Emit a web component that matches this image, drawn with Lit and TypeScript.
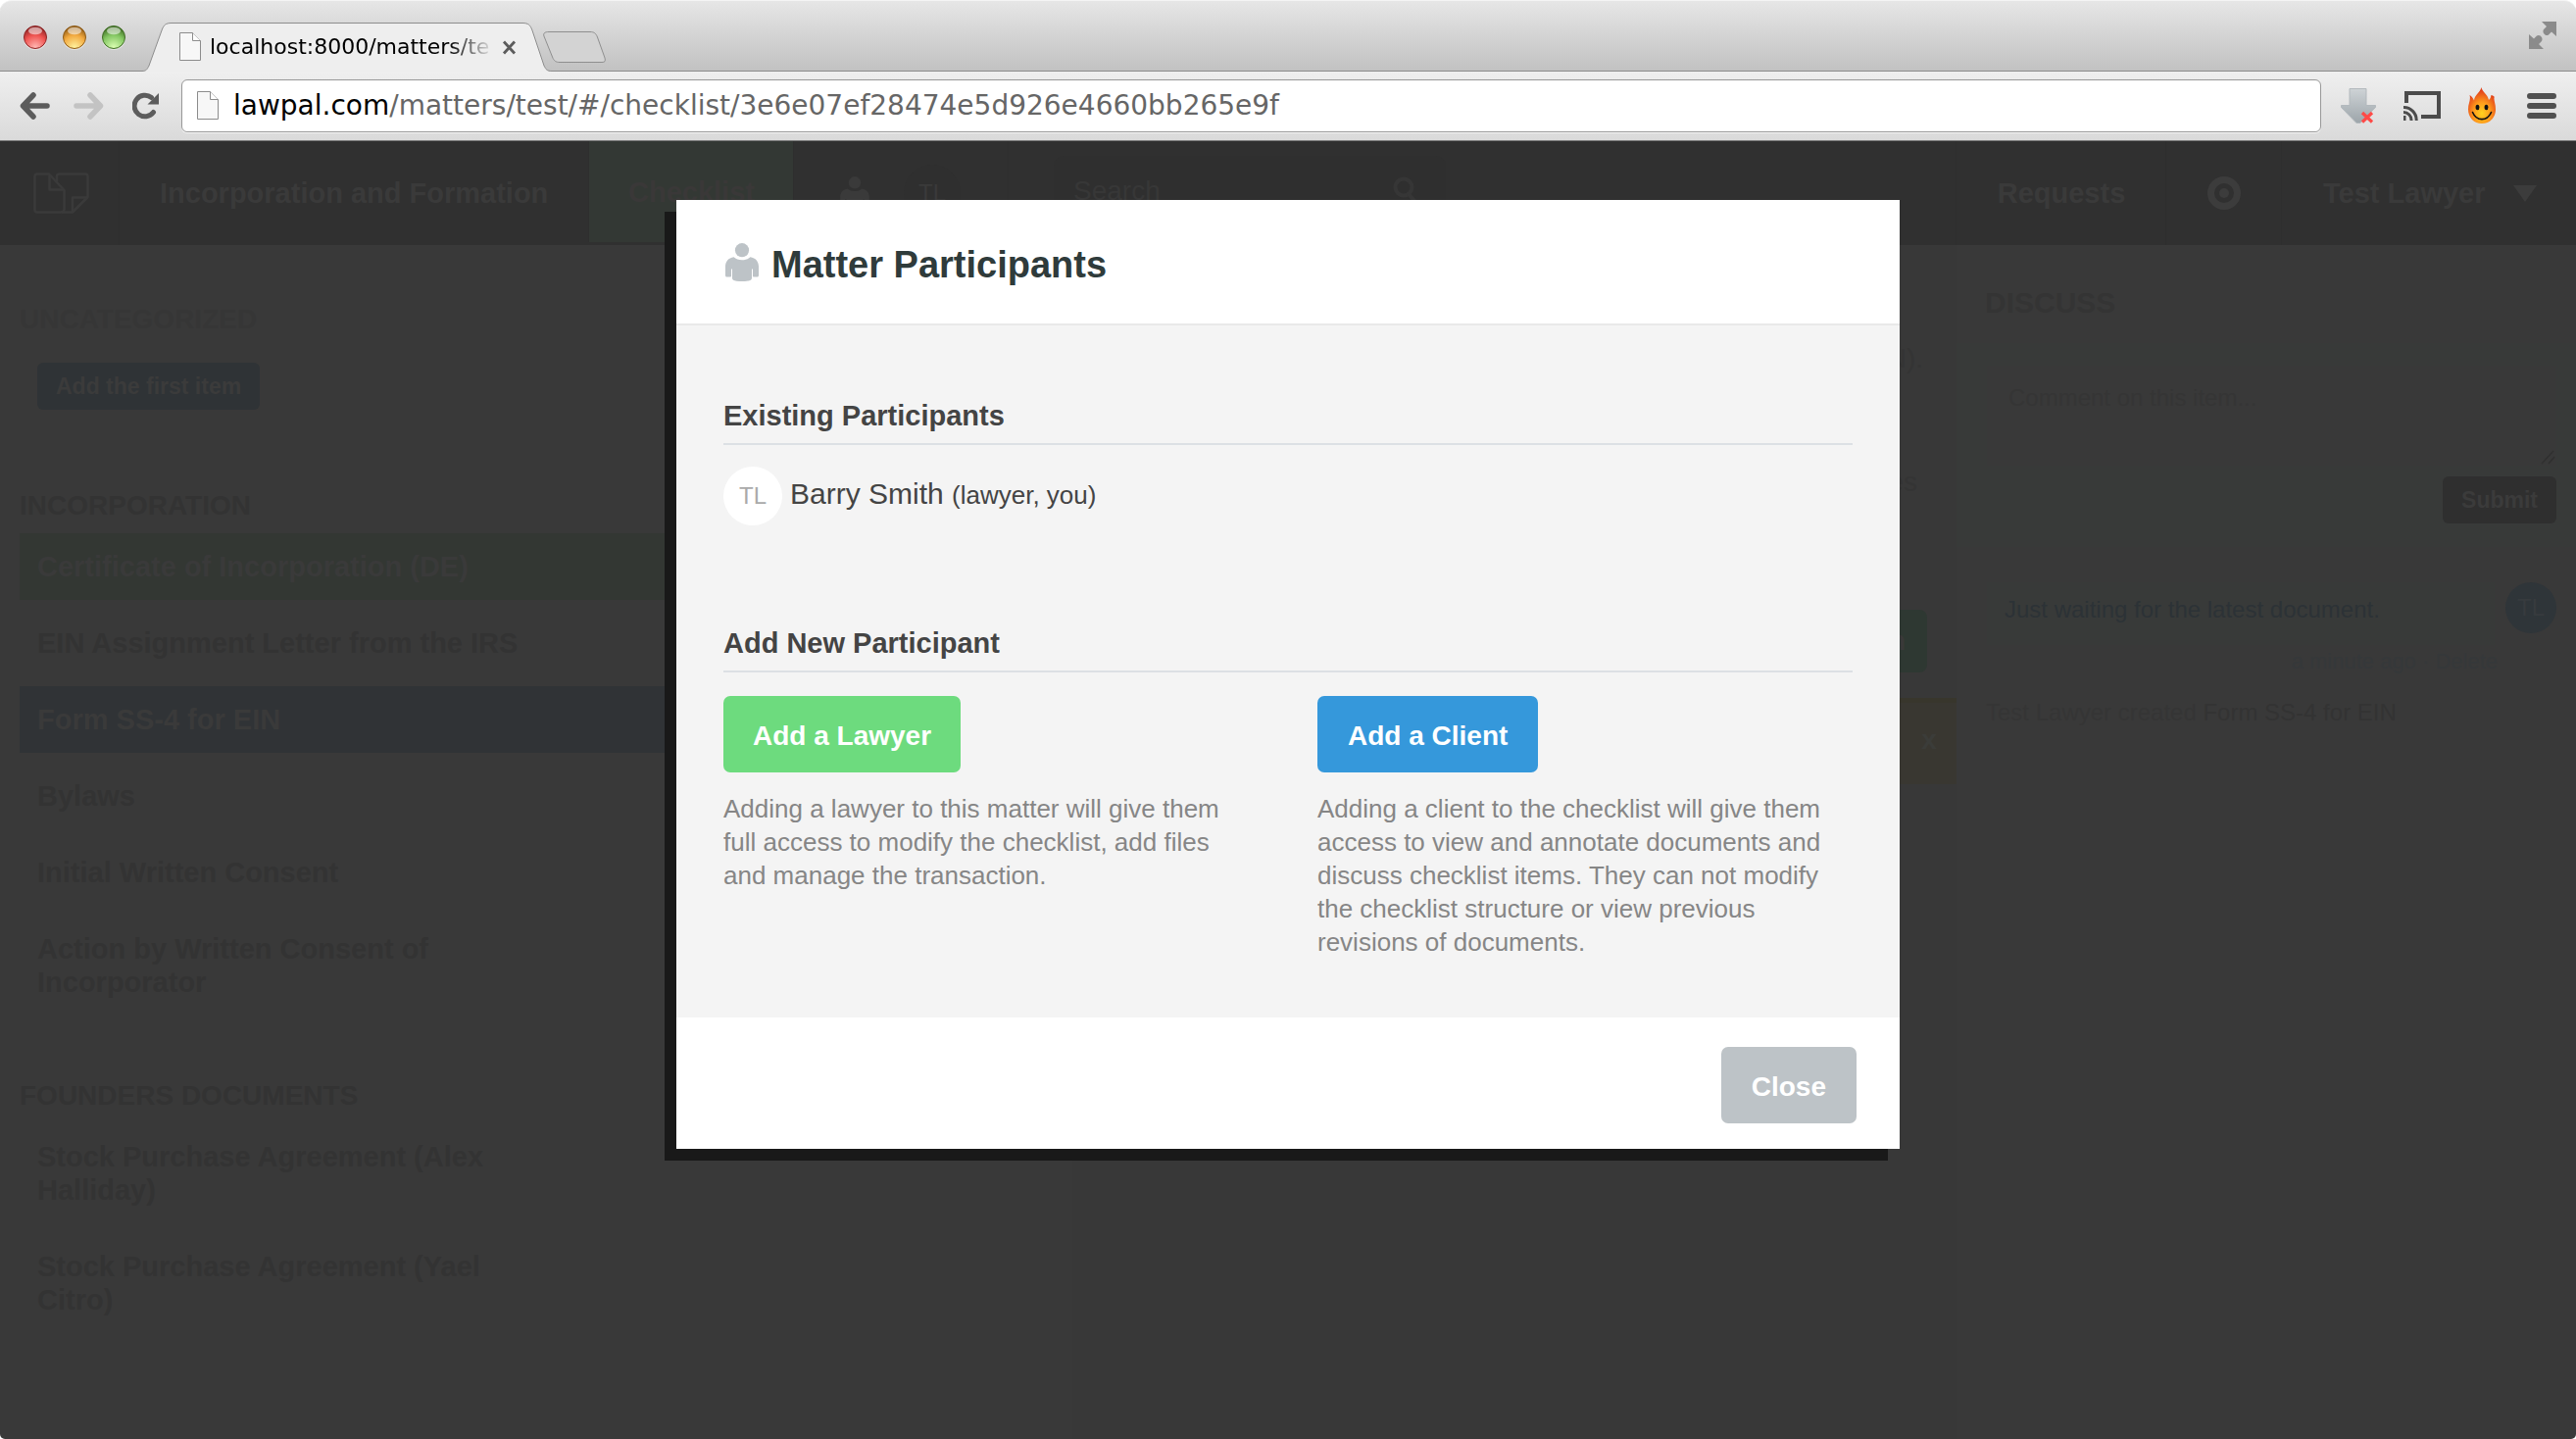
import { LitElement, html, css, svg } from "lit";
import { customElement } from "lit/decorators.js";
import { classMap } from "lit/directives/class-map.js";

interface Item {
  text: string;
  tone?: "done" | "current";
}
interface Group {
  title: string;
  items: Item[];
}

const GROUPS: Group[] = [
  {
    title: "INCORPORATION",
    items: [
      { text: "Certificate of Incorporation (DE)", tone: "done" },
      { text: "EIN Assignment Letter from the IRS" },
      { text: "Form SS-4 for EIN", tone: "current" },
      { text: "Bylaws" },
      { text: "Initial Written Consent" },
      { text: "Action by Written Consent of Incorporator" },
    ],
  },
  {
    title: "FOUNDERS DOCUMENTS",
    items: [
      { text: "Stock Purchase Agreement (Alex Halliday)" },
      { text: "Stock Purchase Agreement (Yael Citro)" },
    ],
  },
];

const personShape = svg`
  <circle cx="17" cy="7.2" r="7.1"/>
  <path d="M8.600 14.300C10.600 16.200 13.600 17.200 17 17.200s6.400-1 8.400-2.900c5.600.8 8.600 4.700 8.600 9.700v8.400c0 1.600-.6 2.200-2 2.200h-3.200c-.5 0-.8-.3-.8-.8V26.500h-1V35.600c0 1.300-.5 1.900-1.600 2.300-2.400.8-5.200 1.200-8.400 1.200s-6-.4-8.400-1.200C7.500 37.500 7 36.900 7 35.600V26.500H6v7.300c0 .5-.3.800-.8.800H2c-1.400 0-2-.6-2-2.200V24c0-5 3-8.900 8.600-9.700z"/>`;

const pageIcon = html`
  <svg width="22" height="30" viewBox="0 0 22 30" aria-hidden="true">
    <path d="M.5.500h13l8 8v20h-21z" fill="#f7f7f7" stroke="#8c8c8c"/>
    <path d="M13.500.500v8h8" fill="#fff" stroke="#8c8c8c"/>
  </svg>`;

const light = (id: string, rim: string, mid: string, low: string) => html`
  <svg width="26" height="28" viewBox="0 0 26 28" aria-hidden="true">
    <defs>
      <radialGradient id=${id} cx=".5" cy=".95" r=".9">
        <stop offset="0" stop-color=${low}/>
        <stop offset=".6" stop-color=${mid}/>
        <stop offset="1" stop-color=${rim}/>
      </radialGradient>
    </defs>
    <circle cx="13" cy="15" r="12" fill="#fff" opacity=".45"/>
    <circle cx="13" cy="14" r="11.500" fill="url(#${id})" stroke=${rim}/>
    <ellipse cx="13" cy="7.500" rx="7" ry="3.800" fill="#fff" opacity=".55"/>
  </svg>`;

@customElement("browser-chrome")
class BrowserChrome extends LitElement {
  static styles = css`
    :host { display: block; font-family: "DejaVu Sans", "Noto Sans", sans-serif; background: #fff; }
    svg { display: block; flex: none; }
    button { border: 0; padding: 0; margin: 0; background: none; font: inherit; display: block; }
    .strip {
      display: flex; align-items: flex-end; height: 73px; box-sizing: border-box;
      border-top: 1px solid #f4f4f4; border-radius: 12px 12px 0 0;
      background: linear-gradient(#e6e6e6, #c1c1c1);
      box-shadow: inset 0 -1px #8d8d8d;
    }
    .lights { display: flex; gap: 14px; padding: 0 16px 21px 23px; }
    .tab { position: relative; width: 418px; height: 50px; }
    .shape { position: absolute; inset: 0; }
    .inner {
      position: relative; display: flex; align-items: center; height: 50px;
      box-sizing: border-box; padding: 0 36px 0 38px;
    }
    .label {
      flex: 1; margin: 0 8px 0 9px; font-size: 22px; line-height: 30px; color: #000;
      white-space: nowrap;
      -webkit-mask-image: linear-gradient(90deg, #000 84%, transparent);
      mask-image: linear-gradient(90deg, #000 84%, transparent);
    }
    .new { margin: 0 0 8px -9px; position: relative; }
    .full { margin: 0 20px 23px auto; }
    .bar {
      display: flex; align-items: center; height: 71px; box-sizing: border-box;
      padding: 0 20px 1px 20px; background: linear-gradient(#efefef, #dadada);
      border-bottom: 1px solid #7a7a7a;
    }
    .nav { display: flex; gap: 24px; margin-right: 22px; }
    .nav button:last-child { margin-left: 5px; }
    .omni {
      flex: 1; display: flex; align-items: center; gap: 15px; height: 54px;
      box-sizing: border-box; padding: 0 15px; background: #fff;
      border: 1px solid #989898; border-radius: 6px; box-shadow: 0 1px #f6f6f6;
    }
    .url { font-size: 28px; line-height: 40px; color: #666; white-space: nowrap; }
    .host { color: #000; }
    .ext { display: flex; align-items: center; margin-left: 20px; gap: 28px; }
  `;

  render() {
    return html`
      <div class="strip">
        <div class="lights">
          ${light("red", "#8e2424", "#ef5350", "#ffb9b5")}
          ${light("amber", "#8f5a14", "#f2a93f", "#fff3a0")}
          ${light("green", "#3f6d24", "#84c763", "#dcffb4")}
        </div>
        <div class="tab">
          <svg class="shape" width="418" height="50" viewBox="0 0 418 50" aria-hidden="true">
            <path d="M0 49.500C4 49.500 5 48 7 44L20 8C22 2.500 24 .5 30 .5H388C394 .5 396 2.500 398 8L410 44C412 48 413 49.500 418 49.500V50H0z" fill="#eee"/>
            <path d="M0 49.500C4 49.500 5 48 7 44L20 8C22 2.500 24 .5 30 .5H388C394 .5 396 2.500 398 8L410 44C412 48 413 49.500 418 49.500" fill="none" stroke="#8d8d8d"/>
          </svg>
          <div class="inner">
            ${pageIcon}
            <span class="label">localhost:8000/matters/te</span>
            <button aria-label="Close tab">
              <svg width="15" height="15" viewBox="0 0 15 15" aria-hidden="true">
                <path d="M2 1.500l11 12M13 1.500L2 13.500" stroke="#5c5c5c" stroke-width="2.800"/>
              </svg>
            </button>
          </div>
        </div>
        <button class="new" aria-label="New tab">
          <svg width="64" height="33" viewBox="0 0 64 33" aria-hidden="true">
            <path d="M6 .5H48C52 .5 54 2 55.500 6L63 27C64 30.500 63 31.500 60 31.500H17C13 31.500 11 30 9.500 26L1 5C0 2 1.500 .5 6 .5z" fill="#d3d3d3" stroke="#8f8f8f"/>
          </svg>
        </button>
        <button class="full" aria-label="Enter full screen">
          <svg width="28" height="28" viewBox="0 0 28 28" fill="#8b8b8b" aria-hidden="true">
            <path d="M13 0h15v15l-5-4.500-3 3c-3 2-7-2-5-5.500l3-3z"/>
            <path d="M0 13l5 4.500 3-3c3-2 7 2 5 5.500l-3 3 5 5H0z"/>
          </svg>
        </button>
      </div>
      <div class="bar">
        <div class="nav">
          <button aria-label="Back">
            <svg width="31" height="28" viewBox="0 0 31 28" fill="none" stroke="#5c5c5c" stroke-width="5.500" stroke-linecap="round" stroke-linejoin="round" aria-hidden="true">
              <path d="M28 14H4M14 3L3.500 14 14 25"/>
            </svg>
          </button>
          <button aria-label="Forward">
            <svg width="31" height="28" viewBox="0 0 31 28" fill="none" stroke="#c3c3c3" stroke-width="5.500" stroke-linecap="round" stroke-linejoin="round" aria-hidden="true">
              <path d="M3 14h24M17 3l10.500 11L17 25"/>
            </svg>
          </button>
          <button aria-label="Reload">
            <svg width="28" height="28" viewBox="0 0 28 28" aria-hidden="true">
              <path d="M21.500 20.500A10.800 10.800 0 1 1 19.500 5.500" fill="none" stroke="#5c5c5c" stroke-width="5" stroke-linecap="round"/>
              <path d="M27 1v11.500H15.500z" fill="#5c5c5c"/>
            </svg>
          </button>
        </div>
        <div class="omni">
          ${pageIcon}
          <span class="url"><span class="host">lawpal.com</span>/matters/test/#/checklist/3e6e07ef28474e5d926e4660bb265e9f</span>
        </div>
        <div class="ext">
          <svg width="36" height="36" viewBox="0 0 36 36" aria-hidden="true">
            <defs>
              <linearGradient id="dl" x2="0" y2="1"><stop offset="0" stop-color="#ced3d6"/><stop offset="1" stop-color="#9da5aa"/></linearGradient>
            </defs>
            <path d="M9 .5h17v17h9.500v2L20 35.500h-4L.5 19.500v-2H9z" fill="url(#dl)" stroke="#b3b9bd"/>
            <path d="M22 25l10 9.500M32 25l-10 9.500" stroke="#ff4a47" stroke-width="3.200"/>
          </svg>
          <svg width="38" height="30" viewBox="0 0 38 30" fill="none" stroke="#4c4c4c" aria-hidden="true">
            <path d="M3 12V2h33v24H18" stroke-width="4"/>
            <path d="M0 27.500h2.500" stroke-width="5"/>
            <path d="M0 21.500A8 8 0 0 1 8 30M0 16.500A13 13 0 0 1 13.200 30" stroke-width="3"/>
          </svg>
          <svg width="28" height="38" viewBox="0 0 28 38" aria-hidden="true">
            <defs>
              <radialGradient id="fl" cx=".5" cy=".72" r=".62"><stop offset="0" stop-color="#ffd21f"/><stop offset=".5" stop-color="#ff9a1c"/><stop offset="1" stop-color="#e2431b"/></radialGradient>
            </defs>
            <path d="M13.500 0c.3 4.500 6.500 7 7.500 13 1.500-1 2-3 2.500-5 1.200 0 3 1 3.200 2-1 3 1.300 6 1.300 12.500 0 8.500-6 14.500-14 14.500S0 31 0 22.500C0 16.500 3 13 1.500 8c2 1 3.500 3 4.500 5.500C6.500 8 12 5.500 13.500 0z" fill="url(#fl)"/>
            <ellipse cx="9.500" cy="20.500" rx="1.900" ry="2.800" fill="#111"/>
            <ellipse cx="18.500" cy="20.500" rx="1.900" ry="2.800" fill="#111"/>
            <path d="M4.500 25.500c4 9.500 15 9.500 19 0" fill="none" stroke="#111" stroke-width="1.600" stroke-linecap="round"/>
          </svg>
          <button aria-label="Menu">
            <svg width="34" height="28" viewBox="0 0 34 28" stroke="#505050" stroke-width="6" stroke-linecap="round" aria-hidden="true">
              <path d="M7 4h24M7 14h24M7 24h24"/>
            </svg>
          </button>
        </div>
      </div>`;
  }
}

@customElement("matter-page")
class MatterPage extends LitElement {
  static styles = css`
    :host { display: flex; flex-direction: column; font-size: 28px; line-height: 34px; color: #333; }
    * { box-sizing: border-box; }
    h2, p, ul, ol { margin: 0; padding: 0; list-style: none; }
    a { color: inherit; text-decoration: none; }
    button, input, textarea { font: inherit; border: 0; margin: 0; }
    svg { display: block; flex: none; }
    .top {
      display: flex; height: 106px; background: #303030; color: #3a3a3a;
      font-size: 29px; font-weight: bold; white-space: nowrap;
    }
    .cell { display: flex; align-items: center; box-shadow: -1px 0 #2e2e2e; }
    .logo { width: 122px; padding-left: 34px; }
    .matter { width: 479px; padding-left: 41px; }
    .tab { width: 209px; justify-content: center; background: #333834; color: #3a3838; margin-bottom: 3px; }
    .people { width: 219px; padding-left: 47px; gap: 35px; }
    .badge {
      display: grid; place-items: center; width: 58px; height: 58px; border-radius: 50%;
      background: #2f2f2f; font-size: 24px; font-weight: normal;
    }
    .search { flex: 1; padding-left: 46px; }
    .box { display: flex; align-items: center; width: 400px; height: 76px; padding: 0 28px 4px 20px; border-radius: 10px; background: #2f2f2f; }
    .box input { flex: 1; min-width: 0; font-size: 28px; font-weight: normal; background: none; color: #373737; padding: 0; }
    .box input::placeholder { color: #373737; opacity: 1; }
    .requests { width: 214px; justify-content: center; }
    .record { width: 118px; justify-content: center; }
    .user { width: 300px; padding: 0 40px 0 42px; justify-content: space-between; }
    .cols { flex: 1; display: grid; grid-template-columns: minmax(0, 1094fr) minmax(0, 902fr) minmax(0, 632fr); }
    .list { padding: 59px 0 0 20px; }
    .head { font-size: 28px; line-height: 34px; font-weight: bold; }
    .faint { color: #363636; }
    .small {
      display: block; height: 48px; border-radius: 6px; padding: 0 19px;
      font-size: 23px; line-height: 48px; font-weight: bold; color: #3b3b3b;
    }
    .first { margin: 27px 0 81px 18px; background: #2f3336; }
    .items { display: grid; gap: 10px; margin: 11px 0 65px; }
    .item { display: block; padding: 17px 18px; font-size: 29px; font-weight: bold; }
    .words { display: block; max-width: 510px; }
    .done { background: #333733; color: #3a3a3a; }
    .current { background: #303336; color: #3a3a3a; }
    .detail { display: flex; flex-direction: column; align-items: flex-end; padding-top: 99px; background: #383838; }
    .note { margin-right: 34px; padding-bottom: 92px; color: #343434; }
    .note + .note { padding: 0 6px 113px 0; }
    .open { height: 64px; padding: 0 22px; border-radius: 8px; background: #2e3832; color: #393939; font-size: 28px; font-weight: bold; margin-right: 30px; }
    .alert {
      align-self: stretch; display: flex; justify-content: flex-end; align-items: center;
      height: 88px; margin-top: 26px; padding: 0 18px 8px; background: #393731; border-top: 5px solid #38362c;
    }
    .alert button { background: none; color: #3b3c39; font-weight: bold; padding: 0; width: 20px; }
    .title { font-size: 30px; font-weight: bold; padding: 42px 29px 0; line-height: 34px; color: #343434; }
    .form { margin-top: 24px; padding: 23px 20px 24px 31px; background: #383a39; display: grid; justify-items: end; gap: 11px; }
    .comment { position: relative; width: 100%; height: 102px; display: grid; }
    .comment textarea { width: 100%; height: 102px; padding: 16px 22px; font-size: 24px; line-height: 34px; background: #393939; resize: none; }
    .comment textarea::placeholder { color: #353535; opacity: 1; }
    .grip { position: absolute; right: 1px; bottom: 1px; }
    .submit { background: #2f2f2f; }
    .msg { display: flex; gap: 11px; padding: 36px 20px 0 31px; align-items: flex-start; font-size: 24px; }
    .bubble { flex: 1; padding: 11px 18px 19px; background: #383a39; color: #2c3236; }
    .msg .badge { width: 52px; height: 52px; background: #2f3539; color: #373b3e; }
    .meta { text-align: right; padding: 0 80px 0 0; font-size: 22px; line-height: 34px; color: #35383a; }
    .log { padding: 18px 30px; font-size: 24px; line-height: 34px; color: #353535; }
    .log b { font-weight: normal; color: #333; }
  `;

  private group(g: Group) {
    return html`
      <h2 class="head">${g.title}</h2>
      <ul class="items">
        ${g.items.map(
          (i) => html`<li><a href="#" class=${classMap({ item: true, done: i.tone === "done", current: i.tone === "current" })}><span class="words">${i.text}</span></a></li>`
        )}
      </ul>`;
  }

  render() {
    return html`
      <nav class="top">
        <a class="cell logo" href="#" aria-label="Home">
          <svg width="58" height="42" viewBox="0 0 58 42" fill="none" stroke="#3a3a3a" stroke-width="2.500" stroke-linejoin="round" aria-hidden="true">
            <path d="M16 1.500H4C2.500 1.500 1.500 2.500 1.500 4V38c0 1.500 1 2.500 2.500 2.500H28c2.500 0 3.500-1 3.500-3V18L16 1.500z"/>
            <path d="M16.500 2.500V17.500H31"/>
            <path d="M24 9V4c0-1.500 1-2.500 2.500-2.500H53c1.500 0 2.500 1 2.500 2.500V25L40 40.500H29"/>
            <path d="M40 40V25.500H55"/>
          </svg>
        </a>
        <a class="cell matter" href="#">Incorporation and Formation</a>
        <a class="cell tab" href="#">Checklist</a>
        <div class="cell people">
          <svg width="30" height="34" viewBox="0 0 34 39" fill="#3a3a3a" aria-hidden="true">${personShape}</svg>
          <span class="badge">TL</span>
        </div>
        <div class="cell search">
          <div class="box">
            <input type="text" placeholder="Search" aria-label="Search">
            <svg width="26" height="32" viewBox="0 0 26 32" fill="none" stroke="#363636" stroke-width="4" aria-hidden="true">
              <circle cx="11" cy="12" r="8.500"/><path d="M16 19l7 8"/>
            </svg>
          </div>
        </div>
        <a class="cell requests" href="#">Requests</a>
        <a class="cell record" href="#" aria-label="Activity">
          <svg width="34" height="34" viewBox="0 0 34 34" aria-hidden="true">
            <circle cx="17" cy="17" r="13.500" fill="none" stroke="#3c3c3c" stroke-width="7"/>
            <circle cx="17" cy="17" r="5" fill="#3c3c3c"/>
          </svg>
        </a>
        <a class="cell user" href="#">Test Lawyer
          <svg width="24" height="17" viewBox="0 0 24 17" aria-hidden="true"><path d="M0 0h24L12 17z" fill="#3c3c3c"/></svg>
        </a>
      </nav>
      <div class="cols">
        <section class="list">
          <h2 class="head faint">UNCATEGORIZED</h2>
          <button class="small first">Add the first item</button>
          ${GROUPS.map((g) => this.group(g))}
        </section>
        <section class="detail">
          <p class="note">(EIN).</p>
          <p class="note">es</p>
          <button class="open">Open</button>
          <div class="alert"><button aria-label="Dismiss">x</button></div>
        </section>
        <section class="discuss">
          <h2 class="title">DISCUSS</h2>
          <div class="form">
            <div class="comment">
              <textarea placeholder="Comment on this item..." aria-label="Comment"></textarea>
              <svg class="grip" width="15" height="15" viewBox="0 0 15 15" stroke="#303030" stroke-width="1.500" aria-hidden="true"><path d="M1 14L13 1M8 14l6-7"/></svg>
            </div>
            <button class="small submit">Submit</button>
          </div>
          <div class="msg">
            <p class="bubble">Just waiting for the latest document.</p>
            <span class="badge">TL</span>
          </div>
          <p class="meta">a minute ago · Delete</p>
          <p class="log">Test Lawyer created <b>Form SS-4 for EIN</b></p>
        </section>
      </div>`;
  }
}

@customElement("participants-dialog")
class ParticipantsDialog extends LitElement {
  static styles = css`
    :host {
      display: block; width: 1248px; max-width: 100%; background: #fff;
      box-shadow: -12px 12px #191919; color: #444; line-height: 34px;
    }
    * { box-sizing: border-box; }
    h2, h3, p { margin: 0; }
    svg { display: block; flex: none; }
    .head { display: flex; align-items: center; gap: 13px; padding: 44px 50px 38px; border-bottom: 2px solid #e9e9e9; }
    .head h2 { font-size: 38px; line-height: 44px; font-weight: bold; color: #2f3b3b; }
    .icon { align-self: flex-start; }
    .body { background: #f4f4f4; padding: 75px 48px 60px; }
    .body h3 { font-size: 29px; font-weight: bold; padding-bottom: 11px; border-bottom: 2px solid #dce0e4; }
    .person { display: flex; align-items: center; gap: 8px; margin: 22px 0 103px; font-size: 30px; white-space: nowrap; }
    .avatar {
      display: grid; place-items: center; width: 60px; height: 60px; border-radius: 50%;
      background: #fff; color: #aaa; font-size: 24px;
    }
    .role { font-size: 26px; }
    .name { padding-bottom: 4px; }
    .options { display: grid; grid-template-columns: 1fr 1fr; gap: 60px; margin-top: 24px; }
    .options p { margin-top: 20px; font-size: 26px; color: #868686; }
    button {
      display: block; height: 78px; margin: 0; padding: 3px 31px 0; border: 0; border-radius: 7px;
      font: inherit; font-size: 28px; font-weight: bold; color: #fff; background: #bdc3c7;
    }
    .lawyer { background: #6ddb7e; padding: 3px 30px 0; }
    .client { background: #3598db; }
    .foot { display: flex; justify-content: flex-end; padding: 30px 44px 26px; }
  `;

  render() {
    return html`
      <div class="head">
        <svg class="icon" width="34" height="39" viewBox="0 0 34 39" fill="#bdc3c7" aria-hidden="true">${personShape}</svg>
        <h2>Matter Participants</h2>
      </div>
      <div class="body">
        <h3>Existing Participants</h3>
        <div class="person">
          <span class="avatar">TL</span>
          <span class="name">Barry Smith <span class="role">(lawyer, you)</span></span>
        </div>
        <h3>Add New Participant</h3>
        <div class="options">
          <div>
            <button class="lawyer">Add a Lawyer</button>
            <p>Adding a lawyer to this matter will give them full access to modify the checklist, add files and manage the transaction.</p>
          </div>
          <div>
            <button class="client">Add a Client</button>
            <p>Adding a client to the checklist will give them access to view and annotate documents and discuss checklist items. They can not modify the checklist structure or view previous revisions of documents.</p>
          </div>
        </div>
      </div>
      <div class="foot"><button>Close</button></div>`;
  }
}

@customElement("app-root")
class AppRoot extends LitElement {
  static styles = css`
    :host {
      display: flex; flex-direction: column; min-height: 100vh; background: #fff;
      font-family: "Liberation Sans", Arial, Helvetica, sans-serif;
    }
    .stage { position: relative; flex: 1; display: flex; background: #393939; border-radius: 0 0 5px 5px; overflow: hidden; }
    matter-page { flex: 1; min-width: 0; }
    .layer { position: absolute; inset: 0; display: flex; justify-content: center; align-items: flex-start; padding-top: 60px; }
  `;

  render() {
    return html`
      <browser-chrome></browser-chrome>
      <div class="stage">
        <matter-page></matter-page>
        <div class="layer">
          <participants-dialog role="dialog" aria-label="Matter Participants"></participants-dialog>
        </div>
      </div>`;
  }
}
